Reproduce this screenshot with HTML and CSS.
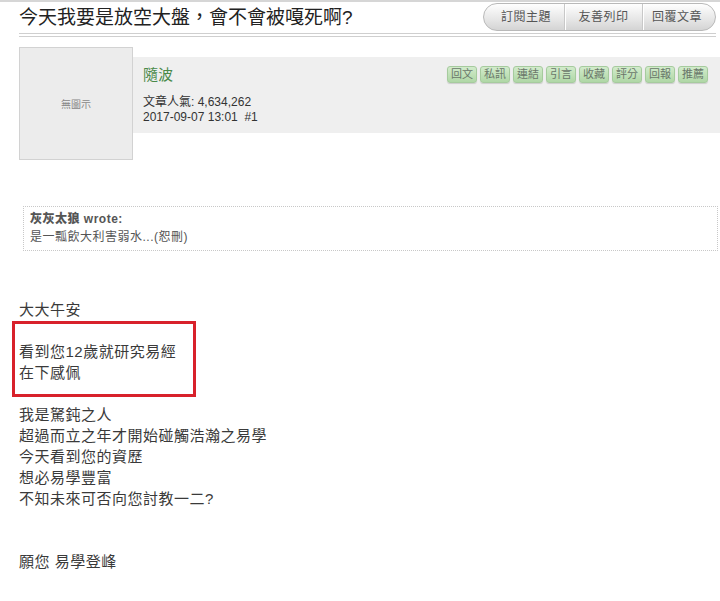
FILE: index.html
```html
<!DOCTYPE html>
<html lang="zh-Hant">
<head>
    <meta charset="UTF-8">
    <meta name="viewport" content="width=device-width, initial-scale=1.0">
    <title>今天我要是放空大盤，會不會被嘎死啊?</title>
    <link rel="stylesheet" href="styles.css">
</head>
<body>
    <div class="page">
        <!-- Topic header -->
        <div class="topic-head">
            <h1 class="topic-title">今天我要是放空大盤，會不會被嘎死啊?</h1>
            <div class="topic-tools">
                <a class="tool-btn">訂閱主題</a>
                <a class="tool-btn">友善列印</a>
                <a class="tool-btn">回覆文章</a>
            </div>
        </div>

        <!-- Post author row -->
        <div class="post-head">
            <div class="avatar">無圖示</div>
            <div class="post-info">
                <div class="author">
                    <div class="author-name">隨波</div>
                    <div class="author-meta">文章人氣: 4,634,262</div>
                    <div class="author-meta">2017-09-07 13:01&nbsp; #1</div>
                </div>
                <div class="post-actions">
                    <a class="act-btn">回文</a>
                    <a class="act-btn">私訊</a>
                    <a class="act-btn">連結</a>
                    <a class="act-btn">引言</a>
                    <a class="act-btn">收藏</a>
                    <a class="act-btn">評分</a>
                    <a class="act-btn">回報</a>
                    <a class="act-btn">推薦</a>
                </div>
            </div>
        </div>

        <!-- Quote -->
        <div class="quote">
            <div class="quote-who"><b>灰灰太狼</b> wrote:</div>
            <div class="quote-text">是一瓢飲大利害弱水...(恕刪)</div>
        </div>

        <!-- Post body -->
        <div class="post-body">
            大大午安<br>
            <br>
            看到您12歲就研究易經<br>
            在下感佩<br>
            <br>
            我是駑鈍之人<br>
            超過而立之年才開始碰觸浩瀚之易學<br>
            今天看到您的資歷<br>
            想必易學豐富<br>
            不知未來可否向您討教一二?<br>
            <br>
            <br>
            願您 易學登峰
            <div class="mark"></div>
        </div>
    </div>
</body>
</html>
```

FILE: styles.css
```css
* {
    margin: 0;
    padding: 0;
    box-sizing: border-box;
}

body {
    font-family: "Liberation Sans", "Noto Sans CJK TC", sans-serif;
    background: #fff;
    color: #333;
}

.page {
    border-top: 2px solid #d6d6d6;
    height: 601px;
    overflow: hidden;
}

/* Topic header */
.topic-head {
    display: flex;
    justify-content: space-between;
    align-items: center;
    height: 35px;
    margin: 0 4px 0 19px;
    border-bottom: 4px double #cfcfcf;
}

.topic-title {
    font-size: 19px;
    font-weight: normal;
    color: #222;
    line-height: 31px;
}

.topic-tools {
    display: flex;
    height: 28px;
    margin-bottom: 2px;
    border: 1px solid #b9b9b9;
    border-radius: 14px;
    background: linear-gradient(#fefefe, #e8e8e8 55%, #d4d4d4);
    overflow: hidden;
}

.tool-btn {
    font-size: 12px;
    line-height: 26px;
    letter-spacing: 0.5px;
    color: #555;
    text-align: center;
    width: 78px;
    border-left: 1px solid #c8c8c8;
    box-shadow: inset 1px 0 0 #fff;
}

.tool-btn:first-child {
    width: 80px;
    border-left: none;
    box-shadow: none;
    padding-left: 4px;
}

.tool-btn:last-child {
    width: 73px;
    padding-right: 4px;
}

/* Author row */
.post-head {
    display: flex;
    margin: 10px 0 0 19px;
}

.avatar {
    width: 114px;
    height: 113px;
    background: #ececec;
    border: 1px solid #d2d2d2;
    font-size: 10px;
    color: #888;
    display: flex;
    align-items: center;
    justify-content: center;
}

.post-info {
    flex: 1;
    height: 76px;
    margin-top: 10px;
    background: #efefef;
    display: flex;
    justify-content: space-between;
    padding: 8px 12px 0 10px;
}

.author-name {
    font-size: 15px;
    line-height: 20px;
    color: #4a8a4a;
    margin-bottom: 10px;
}

.author-meta {
    font-size: 12px;
    line-height: 15px;
    color: #333;
}

.post-actions {
    display: flex;
    gap: 3px;
    margin-top: 1px;
    height: 17px;
}

.act-btn {
    width: 30px;
    height: 17px;
    font-size: 11px;
    line-height: 15px;
    text-align: center;
    color: #6a776a;
    background: linear-gradient(#d2ebcb, #afd7a6);
    border: 1px solid #a6cb9e;
    border-radius: 3px;
    box-shadow: 0 1px 1px rgba(0, 0, 0, 0.15);
}

/* Quote */
.quote {
    margin: 46px 2px 0 23px;
    border: 1px dotted #c8c8c8;
    padding: 3px 6px 4px;
    font-size: 12px;
    line-height: 18px;
    color: #555;
    letter-spacing: 0.5px;
}

.quote-who {
    font-weight: bold;
    color: #555;
}

/* Body text */
.post-body {
    position: relative;
    margin: 48px 0 0 19px;
    font-size: 15px;
    line-height: 21px;
    letter-spacing: 0.5px;
    color: #3a3a3a;
}

/* red annotation over the text */
.mark {
    position: absolute;
    top: 22px;
    left: -7px;
    width: 184px;
    height: 76px;
    border: 3px solid #d8212b;
}
```
